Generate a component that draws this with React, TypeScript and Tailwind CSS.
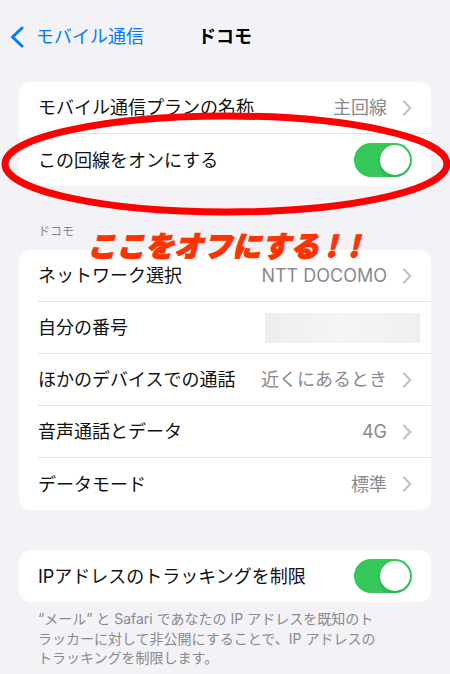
import React from "react";

const FONT = { fontFamily: 'Inter, "Noto Sans CJK JP", "Noto Sans", sans-serif' };

function Chevron() {
  return (
    <svg width="10" height="16" viewBox="0 0 10 16" className="shrink-0">
      <path d="M2 1.5 L8.2 8 L2 14.5" fill="none" stroke="#c4c4c7" strokeWidth="2.2" strokeLinecap="round" strokeLinejoin="round" />
    </svg>
  );
}

function Toggle() {
  return (
    <div className="w-[58px] h-[34px] rounded-full bg-[#34c759] flex items-center justify-end p-[2px] shrink-0">
      <div className="w-[30px] h-[30px] rounded-full bg-white shadow-[0_2px_4px_rgba(0,0,0,0.15)]" />
    </div>
  );
}

function Row({
  label,
  value,
  chevron,
  toggle,
  last,
  blurred,
}: {
  label: string;
  value?: string;
  chevron?: boolean;
  toggle?: boolean;
  last?: boolean;
  blurred?: boolean;
}) {
  return (
    <div className="h-[52px] flex pl-[19px]">
      <div
        className={
          "flex-1 flex items-center h-full pr-[19px] " +
          (last ? "" : "border-b border-[#e3e3e7]")
        }
      >
        <span className="text-[18px] text-[#111] flex-1 whitespace-nowrap">{label}</span>
        {value && (
          <span className="text-[18px] text-[#8a8a8e] mr-[15px] whitespace-nowrap">{value}</span>
        )}
        {blurred && (
          <div className="w-[155px] h-[30px] -mr-[8px] bg-gradient-to-r from-[#eeeef0] via-[#f5f5f6] to-[#efeff1]" />
        )}
        {chevron && <Chevron />}
        {toggle && <Toggle />}
      </div>
    </div>
  );
}

export default function App() {
  return (
    <div className="relative w-[450px] h-[674px] bg-[#f2f2f7] overflow-hidden" style={FONT}>
      {/* Header */}
      <div className="h-[73px] grid grid-cols-[1fr_auto_1fr] items-center">
        <div className="flex items-center pl-[9px]">
          <svg width="16" height="22" viewBox="0 0 16 22" className="mr-[11px]">
            <path d="M13 2 L3.5 11 L13 20" fill="none" stroke="#007aff" strokeWidth="3" strokeLinecap="round" strokeLinejoin="round" />
          </svg>
          <span className="text-[18px] text-[#007aff] whitespace-nowrap">モバイル通信</span>
        </div>
        <div className="text-[18px] font-bold text-black">ドコモ</div>
        <div />
      </div>

      {/* Card 1 */}
      <div className="mt-[9px] mx-[19px] bg-white rounded-[12px] overflow-hidden">
        <Row label="モバイル通信プランの名称" value="主回線" chevron />
        <Row label="この回線をオンにする" toggle last />
      </div>

      {/* Section header */}
      <div className="mt-[38px] mb-[10px] pl-[38px] text-[12px] leading-[16px] text-[#8a8a8e]">ドコモ</div>

      {/* Card 2 */}
      <div className="mx-[19px] bg-white rounded-[12px] overflow-hidden">
        <Row label="ネットワーク選択" value="NTT DOCOMO" chevron />
        <Row label="自分の番号" blurred />
        <Row label="ほかのデバイスでの通話" value="近くにあるとき" chevron />
        <Row label="音声通話とデータ" value="4G" chevron />
        <Row label="データモード" value="標準" chevron last />
      </div>

      {/* Card 3 */}
      <div className="mt-[40px] mx-[19px] bg-white rounded-[12px] overflow-hidden">
        <Row label="IPアドレスのトラッキングを制限" toggle last />
      </div>

      {/* Footer */}
      <div className="pt-[7px] pl-[38px] text-[14px] leading-[19.5px] text-[#8a8a8e]">
        <div className="whitespace-nowrap">“メール” と Safari であなたの IP アドレスを既知のト</div>
        <div className="whitespace-nowrap">ラッカーに対して非公開にすることで、IP アドレスの</div>
        <div className="whitespace-nowrap">トラッキングを制限します。</div>
      </div>

      {/* Annotation: red ellipse */}
      <svg
        className="absolute top-0 left-0 pointer-events-none"
        width="450"
        height="674"
        viewBox="0 0 450 674"
      >
        <ellipse cx="226" cy="164" rx="221" ry="48" fill="none" stroke="#ff0000" strokeWidth="7" />
      </svg>

      {/* Annotation: red text */}
      <div
        className="absolute left-[87px] top-[230px] text-[29px] leading-[29px] font-black italic text-[#ff3300] whitespace-nowrap [-webkit-text-stroke:1.2px_#ff3300]"
        style={{ fontFamily: '"Noto Sans CJK JP", sans-serif' }}
      >
        <span>ここをオフにする</span>
        <span className="ml-[6px] tracking-[11px]">!!</span>
      </div>
    </div>
  );
}
